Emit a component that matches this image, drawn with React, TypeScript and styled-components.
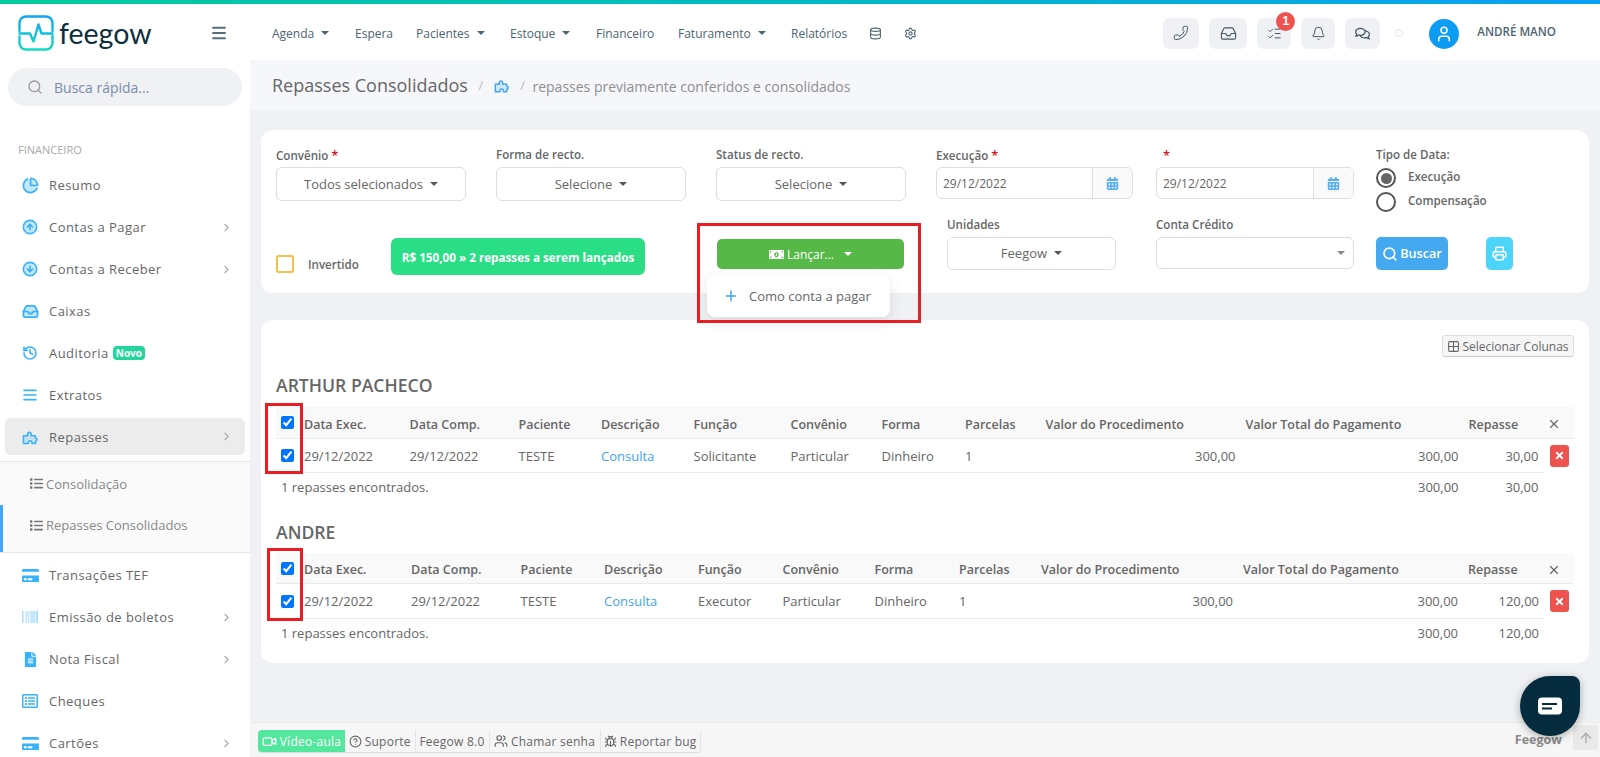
import React from "react";
import styled, { createGlobalStyle } from "styled-components";
import {
  Phone, Inbox, ListChecks, Bell, Database, Settings, Search, User, Menu, ChevronRight,
  Printer, Plus, X, Video, Users, Bug, Grid2x2, CircleArrowUp, CircleArrowDown, History, AlignJustify,
  CircleHelp, PieChart, ArrowUp,
} from "lucide-react";
import { FaCreditCard, FaBarcode, FaFileAlt, FaRegListAlt, FaList, FaMoneyBillAlt, FaRegComments, FaCalendarAlt } from "react-icons/fa";

const GlobalStyle = createGlobalStyle`
  html, body { margin: 0; padding: 0; height: 100%; overflow: hidden; }
  body { font-family: "Open Sans", "Liberation Sans", sans-serif; font-size: 13px; color: #666; background: #fff; }
  * { box-sizing: border-box; }
`;

const Page = styled.div`
  position: relative;
  width: 1600px;
  height: 757px;
  display: flex;
  flex-direction: column;
  overflow: hidden;
`;
const Stripe = styled.div`
  height: 4px;
  flex: none;
  background: linear-gradient(90deg, #05cb9c 0%, #03b9c4 50%, #0a9ff2 100%);
`;
const Header = styled.header`
  height: 56px;
  flex: none;
  display: flex;
  align-items: center;
  background: #fff;
  padding-top: 2px;
`;
const Brand = styled.div`
  width: 250px;
  flex: none;
  display: flex;
  align-items: center;
  padding: 0 22px 0 18px;
  color: #546e7a;
`;
const BrandName = styled.span`
  font-family: "Lato", sans-serif;
  font-size: 28.5px;
  line-height: 36px;
  color: #0d2e40;
  margin-left: 5px;
  flex: 1;
`;
const Nav = styled.nav`
  display: flex;
  align-items: center;
  padding-left: 22px;
  flex: 1;
`;
const NavItem = styled.span<{ $w: number }>`
  width: ${(p) => p.$w}px;
  flex: none;
  display: flex;
  align-items: center;
  font-size: 12px;
  color: #4d6472;
`;
const Caret = styled.i<{ $ml?: number; $c?: string }>`
  display: inline-block;
  margin-left: ${(p) => p.$ml ?? 7}px;
  border-left: 4px solid transparent;
  border-right: 4px solid transparent;
  border-top: 4px solid ${(p) => p.$c ?? "#4d6472"};
`;
const Tools = styled.div`
  display: flex;
  align-items: center;
  padding-right: 44px;
  height: 100%;
`;
const ToolButton = styled.button<{ $w: number; $mr: number }>`
  position: relative;
  width: ${(p) => p.$w}px;
  height: 31px;
  margin-right: ${(p) => p.$mr}px;
  border: 0;
  border-radius: 7px;
  background: #eff1f5;
  color: #455a64;
  display: flex;
  align-items: center;
  justify-content: center;
  padding: 0;
`;
const Handset = styled(Phone)`
  transform: scaleX(-1);
`;
const Badge = styled.span`
  position: absolute;
  top: -6px;
  left: 19px;
  width: 19px;
  height: 19px;
  border-radius: 50%;
  background: #ef5350;
  color: #fff;
  font-size: 12px;
  font-weight: 700;
  display: flex;
  align-items: center;
  justify-content: center;
`;
const StatusDot = styled.span`
  width: 8px;
  height: 8px;
  border-radius: 50%;
  border: 1px solid #e4e4e4;
  margin: 0 26px 0 15px;
`;
const Avatar = styled.span`
  width: 30px;
  height: 30px;
  margin-top: 1px;
  border-radius: 50%;
  background: #0c9cf3;
  color: #fff;
  display: flex;
  align-items: center;
  justify-content: center;
  margin-right: 18px;
`;
const UserName = styled.span`
  font-size: 11.6px;
  font-weight: 600;
  color: #4d6472;
  margin-top: -3px;
  white-space: nowrap;
`;

const Body = styled.div`
  flex: 1;
  display: flex;
  min-height: 0;
`;
const Sidebar = styled.aside`
  width: 250px;
  flex: none;
  background: #fff;
  overflow: hidden;
`;
const SearchBox = styled.div`
  margin: 8px 8px 0;
  height: 38px;
  border-radius: 19px;
  background: #eff1f5;
  display: flex;
  align-items: center;
  padding-left: 19px;
  font-size: 14px;
  color: #7b8ca6;
  gap: 11px;
  svg { color: #9a9a9a; }
`;
const SectionTitle = styled.div`
  margin: 36px 0 6px 18px;
  height: 16px;
  line-height: 16px;
  font-size: 11px;
  color: #a8a8a8;
`;
const MenuRow = styled.div<{ $active?: boolean }>`
  height: ${(p) => (p.$active ? "37px" : "42px")};
  margin: ${(p) => (p.$active ? "2px 5px 2px" : "0")};
  padding: ${(p) => (p.$active ? "0 12px 0 16px" : "0 17px 0 21px")};
  border-radius: 6px;
  background: ${(p) => (p.$active ? "#ececec" : "transparent")};
  display: flex;
  align-items: center;
  font-size: 13px;
  letter-spacing: 0.45px;
  color: #666;
`;
const MenuIcon = styled.span`
  width: 18px;
  height: 18px;
  flex: none;
  margin-right: 10px;
  display: flex;
  align-items: center;
  justify-content: center;
  color: #38b2fb;
`;
const MenuLabel = styled.span`
  flex: 1;
  display: flex;
  align-items: center;
  white-space: nowrap;
`;
const NewTag = styled.span`
  margin-left: 4px;
  padding: 0 3px;
  height: 14px;
  line-height: 14px;
  font-size: 10px;
  font-weight: 700;
  letter-spacing: 0;
  color: #fff;
  background: #22d59b;
  border-radius: 4px;
`;
const SubMenu = styled.div`
  margin-top: 6px;
  margin-bottom: 1px;
  background: #fafafa;
  border-top: 1px solid #e6e6e6;
  border-bottom: 1px solid #e6e6e6;
`;
const SubRow = styled.div<{ $current?: boolean }>`
  height: ${(p) => (p.$current ? "47px" : "43px")};
  padding: ${(p) => (p.$current ? "0 0 7px 27px" : "0 0 0 30px")};
  border-left: ${(p) => (p.$current ? "3px solid #42a5f5" : "0")};
  display: flex;
  align-items: center;
  gap: 3px;
  font-size: 13px;
  color: #888;
  svg { color: #777; }
`;

const Main = styled.main`
  flex: 1;
  min-width: 0;
  display: flex;
  flex-direction: column;
  background: #eff1f5;
`;
const Crumbs = styled.div`
  height: 50px;
  flex: none;
  background: #f6f7fb;
  display: flex;
  align-items: center;
  padding-left: 22px;
  color: #bbb;
`;
const CrumbTitle = styled.h1`
  margin: 0;
  font-size: 18px;
  font-weight: 400;
  color: #666;
`;
const CrumbSep = styled.span`
  margin: 0 10.5px;
  font-size: 13px;
`;
const CrumbText = styled.span`
  font-size: 14px;
  color: #8f8f8f;
  margin: 3px 0 0 -3px;
`;
const Content = styled.div`
  flex: 1;
  padding: 20px 11px 0;
  display: flex;
  flex-direction: column;
  gap: 27px;
`;
const Card = styled.section<{ $h: number }>`
  position: relative;
  height: ${(p) => p.$h}px;
  flex: none;
  background: #fff;
  border-radius: 12px;
  padding: 17px 15px 0;
`;
const FormRow = styled.div<{ $cols: string; $h: number }>`
  display: grid;
  grid-template-columns: ${(p) => p.$cols};
  height: ${(p) => p.$h}px;
`;
const Field = styled.div<{ $w?: number; $top?: number }>`
  width: ${(p) => (p.$w ? `${p.$w}px` : "auto")};
  margin-top: ${(p) => p.$top ?? 0}px;
  position: relative;
`;
const Label = styled.label`
  display: block;
  height: 20px;
  line-height: 16px;
  font-size: 11.6px;
  font-weight: 600;
  color: #666;
  white-space: nowrap;
`;
const Star = styled.span<{ $ml?: number }>`
  color: #e0101a;
  margin-left: ${(p) => p.$ml ?? 0}px;
  font-size: 13px;
`;
const SelectBtn = styled.div<{ $h?: number }>`
  height: ${(p) => p.$h ?? 34}px;
  border: 1px solid #dedede;
  border-radius: 6px;
  background: #fff;
  display: flex;
  align-items: center;
  justify-content: center;
  padding-bottom: 1px;
  font-size: 13px;
  color: #666;
`;
const BareSelect = styled(SelectBtn)`
  justify-content: flex-end;
  padding-right: 8px;
`;
const DateGroup = styled.div`
  height: 32px;
  border: 1px solid #dedede;
  border-radius: 6px;
  display: flex;
  overflow: hidden;
`;
const DateValue = styled.span`
  flex: 1;
  display: flex;
  align-items: center;
  padding-left: 6px;
  font-size: 12px;
  color: #666;
`;
const DateAddon = styled.span`
  width: 40px;
  flex: none;
  border-left: 1px solid #dedede;
  background: #fafafa;
  color: #56aef5;
  display: flex;
  align-items: center;
  justify-content: center;
`;
const RadioGroup = styled.div`
  margin-top: -1px;
`;
const RadioRow = styled.div`
  display: flex;
  align-items: center;
  height: 24px;
  font-size: 11.6px;
  font-weight: 600;
  color: #666;
  gap: 12px;
`;
const RadioText = styled.span`
  margin-top: -4px;
`;
const RadioMark = styled.span<{ $on?: boolean }>`
  width: 20px;
  height: 20px;
  border: 2px solid #555;
  border-radius: 50%;
  background: #fff;
  display: flex;
  align-items: center;
  justify-content: center;
  &::after {
    content: "";
    width: 11px;
    height: 11px;
    border-radius: 50%;
    background: ${(p) => (p.$on ? "#666" : "transparent")};
  }
`;
const CheckRow = styled.div`
  display: flex;
  align-items: center;
  gap: 14px;
  font-size: 11.6px;
  font-weight: 600;
  color: #666;
`;
const OrangeBox = styled.span`
  width: 18px;
  height: 18px;
  border: 2px solid #f7c04f;
  border-radius: 2px;
`;
const TotalBadge = styled.div`
  width: 254px;
  height: 37px;
  background: #2ade85;
  border-radius: 6px;
  display: flex;
  align-items: center;
  justify-content: center;
  color: #fff;
  font-size: 11.7px;
  font-weight: 700;
  white-space: nowrap;
`;
const GreenBtn = styled.div`
  width: 187px;
  height: 30px;
  background: #56b846;
  border-radius: 5px;
  display: flex;
  align-items: center;
  justify-content: center;
  color: #fff;
  font-size: 12px;
  gap: 3px;
`;
const DropMenu = styled.div`
  position: absolute;
  left: -10px;
  top: 36px;
  width: 183px;
  height: 42px;
  background: #fff;
  border-radius: 8px;
  box-shadow: 0 4px 14px rgba(0, 0, 0, 0.1);
  display: flex;
  align-items: center;
  padding-left: 16px;
  gap: 10px;
  font-size: 13px;
  color: #666;
  z-index: 2;
  svg { color: #42a5f5; }
`;
const Mark = styled.div<{ $x: number; $y: number; $w: number; $h: number }>`
  position: absolute;
  left: ${(p) => p.$x}px;
  top: ${(p) => p.$y}px;
  width: ${(p) => p.$w}px;
  height: ${(p) => p.$h}px;
  border: 3px solid #ea1c24;
  z-index: 3;
  pointer-events: none;
`;
const SearchBtn = styled.div`
  width: 72px;
  height: 33px;
  border-radius: 5px;
  background: #45a9f1;
  color: #fff;
  display: flex;
  align-items: center;
  justify-content: center;
  gap: 2px;
  font-size: 12.6px;
  font-weight: 600;
`;
const PrintBtn = styled.div`
  width: 27px;
  height: 33px;
  border-radius: 5px;
  background: #4dd5f9;
  color: #fff;
  display: flex;
  align-items: center;
  justify-content: center;
`;
const ColumnsRow = styled.div`
  display: flex;
  justify-content: flex-end;
  margin-top: -2px;
  height: 22px;
`;
const ColumnsBtn = styled.div`
  width: 132px;
  height: 22px;
  border: 1px solid #ddd;
  border-bottom-color: #c8c8c8;
  border-radius: 3px;
  background: #f6f6f6;
  display: flex;
  align-items: center;
  justify-content: center;
  gap: 2px;
  font-size: 12px;
  color: #666;
  white-space: nowrap;
`;
const GroupTitle = styled.h3<{ $mt: number; $mb: number }>`
  margin: ${(p) => p.$mt}px 0 ${(p) => p.$mb}px;
  height: 24px;
  line-height: 24px;
  font-size: 17.6px;
  font-weight: 600;
  color: #666;
`;
const TableRow = styled.div<{ $cols: string; $h: number; $head?: boolean; $line?: boolean }>`
  display: grid;
  grid-template-columns: ${(p) => p.$cols};
  height: ${(p) => p.$h}px;
  align-items: center;
  background: ${(p) => (p.$head ? "#f9f9f9" : "transparent")};
  border-bottom: ${(p) => (p.$line ? "1px solid #eaeaea" : "0")};
  font-size: ${(p) => (p.$head ? "12.5px" : "13px")};
  font-weight: ${(p) => (p.$head ? 600 : 400)};
  color: #666;
  white-space: nowrap;
  position: relative;
`;
const RowLine = styled.div`
  position: absolute;
  left: 0;
  right: 30px;
  bottom: -1px;
  height: 1px;
  background: #eaeaea;
`;
const Cell = styled.div<{ $right?: boolean; $link?: boolean }>`
  text-align: ${(p) => (p.$right ? "right" : "left")};
  padding-right: ${(p) => (p.$right ? "10px" : "0")};
  color: ${(p) => (p.$link ? "#3fa4ee" : "inherit")};
  display: flex;
  justify-content: ${(p) => (p.$right ? "flex-end" : "flex-start")};
  align-items: center;
`;
const HeadCell = styled(Cell)`
  padding-top: 3px;
`;
const Tick = styled.input`
  width: 13px;
  height: 13px;
  margin: 0 0 0 5px;
  accent-color: #0075ff;
`;
const CloseHead = styled(X)`
  margin-left: -2px;
`;
const DeleteBtn = styled.span`
  width: 19px;
  height: 22px;
  margin-left: 1px;
  border-radius: 3px;
  background: #ef5350;
  color: #fff;
  display: flex;
  align-items: center;
  justify-content: center;
`;
const FooterNote = styled.div`
  grid-column: 1 / span 10;
  padding-left: 5px;
`;
const Foot = styled.footer`
  height: 35px;
  flex: none;
  background: #f6f6f6;
  border-top: 1px solid #ececec;
  display: flex;
  align-items: center;
  padding: 0 2px 0 8px;
`;
const FootGroup = styled.div`
  display: flex;
  height: 22px;
  margin-top: 2px;
  border-radius: 4px;
  box-shadow: 0 1px 1px rgba(0, 0, 0, 0.12);
  overflow: hidden;
  flex: none;
`;
const FootBtn = styled.span<{ $w: number; $green?: boolean }>`
  width: ${(p) => p.$w}px;
  display: flex;
  align-items: center;
  justify-content: center;
  gap: 3px;
  font-size: 12px;
  letter-spacing: 0.25px;
  white-space: nowrap;
  background: ${(p) => (p.$green ? "#53e69d" : "#f6f6f6")};
  color: ${(p) => (p.$green ? "#fff" : "#666")};
  border-right: ${(p) => (p.$green ? "0" : "1px solid #e4e4e4")};
`;
const FootBrand = styled.span`
  margin-left: auto;
  font-size: 12.5px;
  font-weight: 700;
  color: #8a8a8a;
  margin-right: 11px;
  margin-top: -2px;
`;
const TopBtn = styled.span`
  width: 25px;
  height: 25px;
  margin-top: -5px;
  border-radius: 3px;
  background: #e9e9e9;
  color: #aaa;
  display: flex;
  align-items: center;
  justify-content: center;
`;
const ChatBubble = styled.div`
  position: absolute;
  left: 1520px;
  top: 676px;
  width: 60px;
  height: 60px;
  border-radius: 50% 8px 50% 50%;
  background: #052c3e;
  box-shadow: 0 2px 8px rgba(0, 0, 0, 0.3);
  display: flex;
  align-items: center;
  justify-content: center;
  z-index: 4;
`;

const Logo = () => (
  <svg width="36" height="36" viewBox="0 0 36 36" fill="none">
    <defs>
      <linearGradient id="lg" x1="0" y1="0" x2="0" y2="1">
        <stop offset="0" stopColor="#11a6f2" />
        <stop offset="1" stopColor="#14d9c4" />
      </linearGradient>
    </defs>
    <path
      d="M1.5 16V8a6.5 6.5 0 0 1 6.5-6.5h20A6.5 6.5 0 0 1 34.5 8v8M34.5 21v7a6.5 6.5 0 0 1-6.5 6.5H8A6.5 6.5 0 0 1 1.5 28v-6.5M1.5 18.5h10.5l3.5 8 5-17 3 9H34.5"
      stroke="url(#lg)"
      strokeWidth="2.4"
      strokeLinejoin="round"
      strokeLinecap="round"
    />
  </svg>
);

const PuzzleIcon = ({ size, color }: { size: number; color?: string }) => (
  <svg width={size} height={size} viewBox="0 0 24 24" fill="rgba(56,178,251,.2)" stroke={color ?? "currentColor"} strokeWidth="2.2" strokeLinejoin="round">
    <path d="M2 11h6V8.5a2.5 2.5 0 1 1 5 0V11h6v3a2.3 2.3 0 1 1 0 4.600V22h-5v-1.500a2.500 2.500 0 0 0-5 0V22H2z" />
  </svg>
);

const duo = { fill: "rgba(56,178,251,.3)" };
const sideItems = [
  { t: "Resumo", i: <PieChart size={17} {...duo} strokeWidth={2.4} /> },
  { t: "Contas a Pagar", i: <CircleArrowUp size={16} {...duo} strokeWidth={2.4} />, c: true },
  { t: "Contas a Receber", i: <CircleArrowDown size={16} {...duo} strokeWidth={2.4} />, c: true },
  { t: "Caixas", i: <Inbox size={17} {...duo} strokeWidth={2.4} /> },
  { t: "Auditoria", i: <History size={16} strokeWidth={2.4} />, n: true },
  { t: "Extratos", i: <AlignJustify size={16} strokeWidth={2.4} /> },
];
const sideItems2 = [
  { t: "Transações TEF", i: <FaCreditCard size={17} /> },
  { t: "Emissão de boletos", i: <FaBarcode size={16} color="#8ed3fd" />, c: true },
  { t: "Nota Fiscal", i: <FaFileAlt size={15} />, c: true },
  { t: "Cheques", i: <FaRegListAlt size={16} /> },
  { t: "Cartões", i: <FaCreditCard size={17} />, c: true },
];

const SideRow = ({ item }: { item: { t: string; i: React.ReactNode; c?: boolean; n?: boolean } }) => (
  <MenuRow>
    <MenuIcon>{item.i}</MenuIcon>
    <MenuLabel>
      {item.t}
      {item.n && <NewTag>Novo</NewTag>}
    </MenuLabel>
    {item.c && <ChevronRight size={13} color="#aaa" />}
  </MenuRow>
);

const heads = ["Data Exec.", "Data Comp.", "Paciente", "Descrição", "Função", "Convênio", "Forma", "Parcelas", "Valor do Procedimento", "Valor Total do Pagamento"];

const Group = ({
  name, cols, fn, rep, mt, mb, heights,
}: { name: string; cols: string; fn: string; rep: string; mt: number; mb: number; heights: number[] }) => (
  <>
    <GroupTitle $mt={mt} $mb={mb}>{name}</GroupTitle>
    <TableRow $cols={cols} $h={heights[0]} $head $line>
      <Cell><Tick type="checkbox" checked readOnly /></Cell>
      {heads.map((h) => <HeadCell key={h}>{h}</HeadCell>)}
      <HeadCell>Repasse</HeadCell>
      <HeadCell><CloseHead size={14} /></HeadCell>
    </TableRow>
    <TableRow $cols={cols} $h={heights[1]}>
      <Cell><Tick type="checkbox" checked readOnly /></Cell>
      <Cell>29/12/2022</Cell>
      <Cell>29/12/2022</Cell>
      <Cell>TESTE</Cell>
      <Cell $link>Consulta</Cell>
      <Cell>{fn}</Cell>
      <Cell>Particular</Cell>
      <Cell>Dinheiro</Cell>
      <Cell>1</Cell>
      <Cell $right>300,00</Cell>
      <Cell $right>300,00</Cell>
      <Cell $right>{rep}</Cell>
      <Cell><DeleteBtn><X size={11} strokeWidth={4} /></DeleteBtn></Cell>
      <RowLine />
    </TableRow>
    <TableRow $cols={cols} $h={heights[2]}>
      <FooterNote>1 repasses encontrados.</FooterNote>
      <Cell $right>300,00</Cell>
      <Cell $right>{rep}</Cell>
    </TableRow>
  </>
);

const colsA = "28px 105.5px 109px 82.5px 92.5px 97px 91px 83.5px 80.5px 200px 223px 80px 25px";
const colsB = "28px 107px 109.5px 83.5px 94px 84.5px 92px 84.5px 82px 202px 225px 81px 25px";

export default function App() {
  return (
    <Page>
      <GlobalStyle />
      <Stripe />
      <Header>
        <Brand>
          <Logo />
          <BrandName>feegow</BrandName>
          <Menu size={18} strokeWidth={2.4} />
        </Brand>
        <Nav>
          <NavItem $w={83}>Agenda<Caret /></NavItem>
          <NavItem $w={61}>Espera</NavItem>
          <NavItem $w={94}>Pacientes<Caret /></NavItem>
          <NavItem $w={86}>Estoque<Caret /></NavItem>
          <NavItem $w={82}>Financeiro</NavItem>
          <NavItem $w={113}>Faturamento<Caret /></NavItem>
          <NavItem $w={78}>Relatórios</NavItem>
          <NavItem $w={35}><Database size={13} /></NavItem>
          <NavItem $w={20}><Settings size={13} /></NavItem>
        </Nav>
        <Tools>
          <ToolButton $w={36} $mr={10}><Handset size={16} strokeWidth={1.5} /></ToolButton>
          <ToolButton $w={38} $mr={10}><Inbox size={17} strokeWidth={1.6} /></ToolButton>
          <ToolButton $w={34} $mr={10}><ListChecks size={15} strokeWidth={1.6} /><Badge>1</Badge></ToolButton>
          <ToolButton $w={34} $mr={10}><Bell size={15} strokeWidth={1.6} /></ToolButton>
          <ToolButton $w={35} $mr={0}><FaRegComments size={15} /></ToolButton>
          <StatusDot />
          <Avatar><User size={18} strokeWidth={2} /></Avatar>
          <UserName>ANDRÉ MANO</UserName>
        </Tools>
      </Header>
      <Body>
        <Sidebar>
          <SearchBox><Search size={16} />Busca rápida...</SearchBox>
          <SectionTitle>FINANCEIRO</SectionTitle>
          {sideItems.map((s) => <SideRow key={s.t} item={s} />)}
          <MenuRow $active>
            <MenuIcon><PuzzleIcon size={17} /></MenuIcon>
            <MenuLabel>Repasses</MenuLabel>
            <ChevronRight size={13} color="#aaa" />
          </MenuRow>
          <SubMenu>
            <SubRow><FaList size={13} />Consolidação</SubRow>
            <SubRow $current><FaList size={13} />Repasses Consolidados</SubRow>
          </SubMenu>
          {sideItems2.map((s) => <SideRow key={s.t} item={s} />)}
        </Sidebar>
        <Main>
          <Crumbs>
            <CrumbTitle>Repasses Consolidados</CrumbTitle>
            <CrumbSep>/</CrumbSep>
            <PuzzleIcon size={16} color="#42a5f5" />
            <CrumbSep>/</CrumbSep>
            <CrumbText>repasses previamente conferidos e consolidados</CrumbText>
          </Crumbs>
          <Content>
            <Card $h={163}>
              <FormRow $cols="220px 220px 220px 220px 220px 1fr" $h={70}>
                <Field $w={190}><Label>Convênio <Star>*</Star></Label><SelectBtn>Todos selecionados<Caret $c="#555" /></SelectBtn></Field>
                <Field $w={190}><Label>Forma de recto.</Label><SelectBtn>Selecione<Caret $c="#555" /></SelectBtn></Field>
                <Field $w={190}><Label>Status de recto.</Label><SelectBtn>Selecione<Caret $c="#555" /></SelectBtn></Field>
                <Field $w={197}><Label>Execução <Star>*</Star></Label><DateGroup><DateValue>29/12/2022</DateValue><DateAddon><FaCalendarAlt size={13} /></DateAddon></DateGroup></Field>
                <Field $w={198}><Label><Star $ml={7}>*</Star></Label><DateGroup><DateValue>29/12/2022</DateValue><DateAddon><FaCalendarAlt size={13} /></DateAddon></DateGroup></Field>
                <Field>
                  <Label>Tipo de Data:</Label>
                  <RadioGroup>
                    <RadioRow><RadioMark $on /><RadioText>Execução</RadioText></RadioRow>
                    <RadioRow><RadioMark /><RadioText>Compensação</RadioText></RadioRow>
                  </RadioGroup>
                </Field>
              </FormRow>
              <FormRow $cols="115px 326px 230px 209px 220px 110px 1fr" $h={60}>
                <Field $top={38}><CheckRow><OrangeBox />Invertido</CheckRow></Field>
                <Field $top={21}><TotalBadge>R$ 150,00 » 2 repasses a serem lançados</TotalBadge></Field>
                <Field $top={22}>
                  <GreenBtn><FaMoneyBillAlt size={15} />Lançar...<Caret $c="#fff" $ml={7} /></GreenBtn>
                  <DropMenu><Plus size={16} strokeWidth={2.2} />Como conta a pagar</DropMenu>
                </Field>
                <Field $w={169}><Label>Unidades</Label><SelectBtn $h={33}>Feegow<Caret $c="#555" /></SelectBtn></Field>
                <Field $w={198}><Label>Conta Crédito</Label><BareSelect $h={32}><Caret $c="#888" /></BareSelect></Field>
                <Field $top={20}><SearchBtn><Search size={16} strokeWidth={2.4} />Buscar</SearchBtn></Field>
                <Field $top={20}><PrintBtn><Printer size={15} strokeWidth={2.4} /></PrintBtn></Field>
              </FormRow>
              <Mark $x={436} $y={93} $w={224} $h={100} />
            </Card>
            <Card $h={343}>
              <ColumnsRow><ColumnsBtn><Grid2x2 size={13} />Selecionar Colunas</ColumnsBtn></ColumnsRow>
              <Group name="ARTHUR PACHECO" cols={colsA} fn="Solicitante" rep="30,00" mt={16} mb={10} heights={[32, 33, 30]} />
              <Group name="ANDRE" cols={colsB} fn="Executor" rep="120,00" mt={18} mb={9} heights={[31, 34, 30]} />
              <Mark $x={4} $y={83} $w={38} $h={71} />
              <Mark $x={6} $y={228} $w={36} $h={73} />
            </Card>
          </Content>
          <Foot>
            <FootGroup>
              <FootBtn $w={87} $green><Video size={15} />Vídeo-aula</FootBtn>
              <FootBtn $w={70.5}><CircleHelp size={13} />Suporte</FootBtn>
              <FootBtn $w={74}>Feegow 8.0</FootBtn>
              <FootBtn $w={111}><Users size={14} />Chamar senha</FootBtn>
              <FootBtn $w={100.5}><Bug size={13} />Reportar bug</FootBtn>
            </FootGroup>
            <FootBrand>Feegow</FootBrand>
            <TopBtn><ArrowUp size={16} /></TopBtn>
          </Foot>
        </Main>
      </Body>
      <ChatBubble>
        <svg width="24" height="18" viewBox="0 0 24 18">
          <path d="M4 .5h16a4 4 0 0 1 4 4v9a4 4 0 0 1-4 4H4a4 4 0 0 1-4-4v-9a4 4 0 0 1 4-4z" fill="#fff" />
          <path d="M4 6h15v2H4zM4 10.5h10v2H4z" fill="#052c3e" />
        </svg>
      </ChatBubble>
    </Page>
  );
}
